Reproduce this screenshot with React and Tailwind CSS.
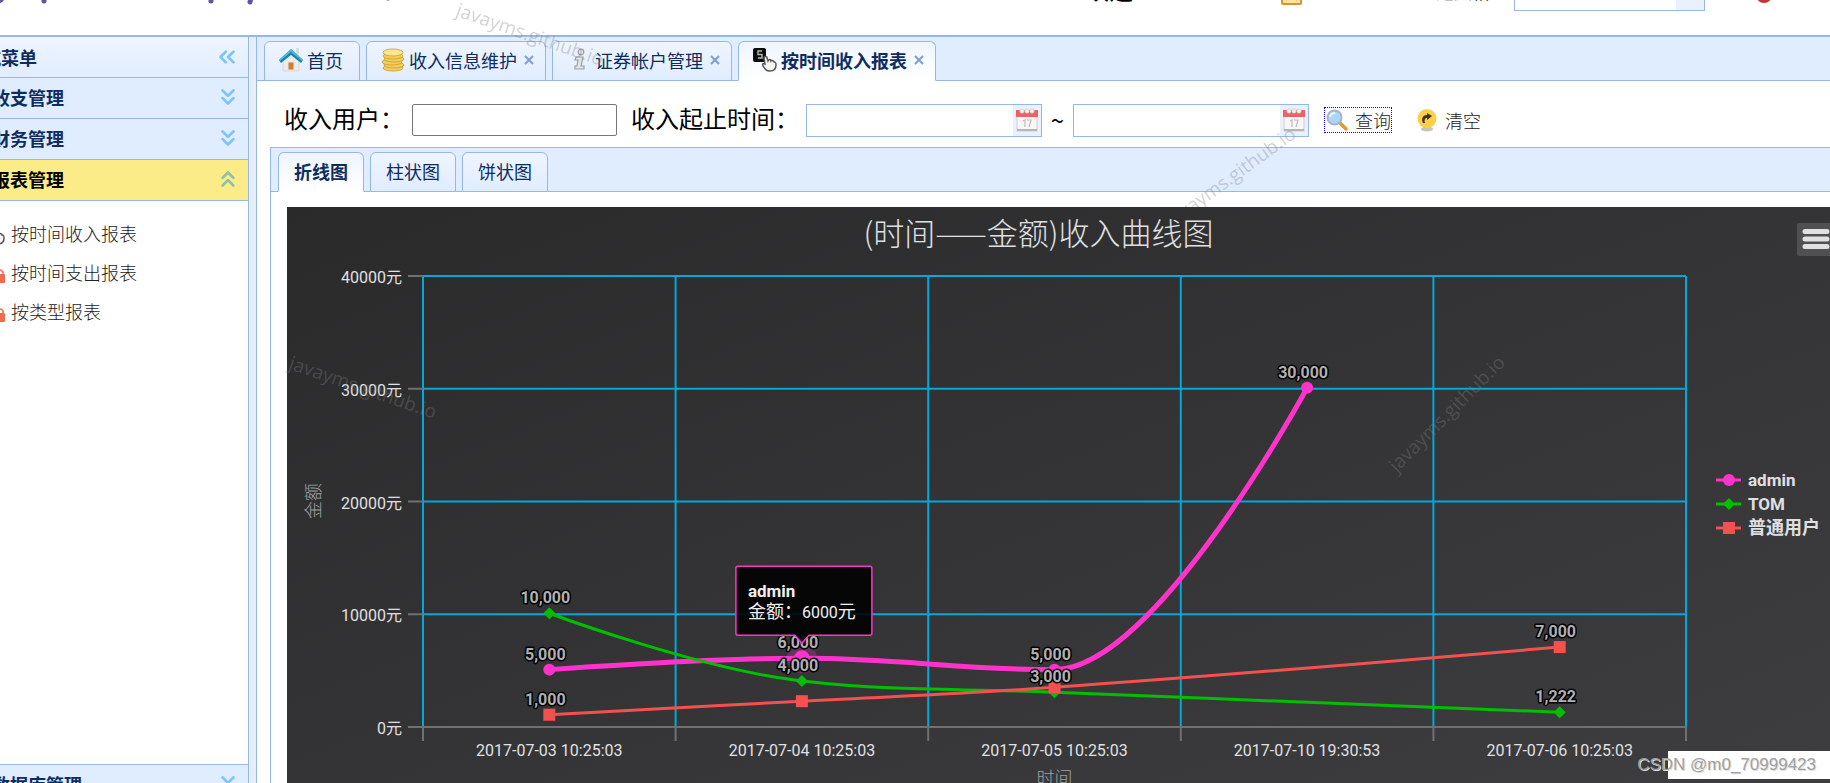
import React, { useLayoutEffect, useRef, useState } from 'react';
import { ChevronsDown, ChevronsLeft, ChevronsUp } from 'lucide-react';

const CHART_FONT = 'Roboto, "Noto Sans CJK SC", sans-serif';

const categories = [
  '2017-07-03 10:25:03',
  '2017-07-04 10:25:03',
  '2017-07-05 10:25:03',
  '2017-07-10 19:30:53',
  '2017-07-06 10:25:03',
];

const series = [
  { name: 'admin', color: '#ff33cc', symbol: 'circle', width: 5, nameSize: 17, data: [5000, 6000, 5000, 30000, null] },
  { name: 'TOM', color: '#00bf00', symbol: 'diamond', width: 3, nameSize: 17, data: [10000, 4000, 3000, null, 1222] },
  { name: '普通用户', color: '#f45050', symbol: 'square', width: 3, nameSize: 18, data: [1000, 2200, 3430, null, 7000] },
];

// labels that would overlap their neighbours are left out
const hiddenLabels = [2200, 3430];

function HomeIcon() {
  return (
    <svg width="24" height="24" viewBox="0 0 24 24">
      <path d="M17 0h3v8h-3z" fill="#dcdce0" />
      <path d="M4 11 12 4l8 7v12H4z" fill="#ececee" stroke="#cfcfd2" strokeWidth="0.6" />
      <path d="M0 12 12 1l12 11-2 3L12 7 2 15z" fill="#1787ab" />
      <path d="M0 12 12 1l12 11-1 1L12 4 1 13z" fill="#4cbbd8" />
      <path d="M9 14h6v8H9z" fill="#c9803f" stroke="#f3e2cf" />
    </svg>
  );
}

function CoinsIcon() {
  return (
    <svg width="24" height="24" viewBox="0 0 24 24">
      <g fill="#f2cf5c" stroke="#c99a2e" strokeWidth="0.8">
        <ellipse cx="12" cy="20" rx="10" ry="3" />
        <ellipse cx="13" cy="17" rx="10" ry="3" />
        <ellipse cx="11" cy="14" rx="10" ry="3" />
        <ellipse cx="13" cy="11" rx="10" ry="3" />
        <ellipse cx="12" cy="8" rx="10" ry="3" />
        <ellipse cx="12" cy="4.5" rx="10" ry="3.5" fill="#fbe590" />
      </g>
    </svg>
  );
}

function InfoIcon() {
  return (
    <svg width="24" height="24" viewBox="0 0 24 24" fill="#e2e4e8" stroke="#9aa0a8" strokeWidth="1.2">
      <circle cx="14" cy="4" r="2.8" />
      <path d="M9 9h7l-2 9h3v3H8v-3h2l1-6H8z" />
    </svg>
  );
}

function ReportIcon() {
  return (
    <svg width="24" height="24" viewBox="0 0 24 24">
      <rect width="13" height="14" rx="2" fill="#0c0c0c" />
      <path d="M9 3H5v3.500h4V10H5" fill="none" stroke="#b9b9b9" strokeWidth="1.4" />
      <path
        d="M11 10c0-2 3-2 3 0l1 3c1-2 3-2 3 0c1-1 3 0 3 1c2 0 2 1 2 3c0 4-2 6-6 6s-5-2-7-5c-1-2 0-3 2-2z"
        fill="#f4f4f4"
        stroke="#555"
        strokeWidth="1.5"
      />
    </svg>
  );
}

function LockIcon() {
  return (
    <svg width="24" height="24" viewBox="0 0 24 24">
      <path d="M15 15v-3a4 4 0 0 1 7 0v3" fill="none" stroke="#ee8a70" strokeWidth="2" />
      <rect x="10" y="14" width="14" height="9" rx="1" fill="#ee6c4d" />
    </svg>
  );
}

function CalendarIcon() {
  return (
    <svg width="22" height="24" viewBox="0 0 22 24">
      <rect x="1" y="4" width="20" height="19" fill="#f7f7f7" stroke="#cfcfcf" />
      <path d="M0 2h22v7H0z" fill="#ec6262" />
      <g fill="#f2f2f2" stroke="#c9c9c9" strokeWidth="0.7">
        <circle cx="6" cy="3" r="2.2" />
        <circle cx="11" cy="3" r="2.2" />
        <circle cx="16" cy="3" r="2.2" />
      </g>
      <path d="M7 13l2-1v7M11 12h4l-2 7" fill="none" stroke="#bdbdbd" strokeWidth="1.2" />
      <path d="M1 22h20" stroke="#b5b5b5" strokeWidth="2" />
    </svg>
  );
}

function SearchIcon() {
  return (
    <svg width="22" height="22" viewBox="0 0 22 22">
      <path d="M13 13l7 7" stroke="#e8952f" strokeWidth="3.5" strokeLinecap="round" />
      <circle cx="8.5" cy="8.5" r="7" fill="#a9d6fb" stroke="#aab4cc" strokeWidth="2" />
      <path d="M4 8a5 5 0 0 1 5-4" stroke="#e8f5ff" strokeWidth="2" fill="none" />
    </svg>
  );
}

function ClearIcon() {
  return (
    <svg width="22" height="24" viewBox="0 0 22 24">
      <ellipse cx="11" cy="21" rx="6" ry="2.5" fill="#c9c4b4" />
      <circle cx="11" cy="10.5" r="9.5" fill="#fbcf4a" />
      <path d="M7 15c-2-5 0-8 4-8V5l5 3-5 4v-2c-2 0-3 2-2 5z" fill="#3a3424" />
    </svg>
  );
}

function CloseIcon() {
  return (
    <svg width="10" height="10" viewBox="0 0 10 10" stroke="#7d9fd0" strokeWidth="2">
      <path d="M1 1l8 8M9 1L1 9" />
    </svg>
  );
}

function Symbol({ type, x, y, color, size = 6 }) {
  if (type === 'circle') return <circle cx={x} cy={y} r={size} fill={color} />;
  if (type === 'square') {
    return <rect x={x - size} y={y - size} width={size * 2} height={size * 2} fill={color} />;
  }
  return <path d={`M${x} ${y - size}L${x + size} ${y}L${x} ${y + size}L${x - size} ${y}Z`} fill={color} />;
}

// smooth curve through the points, never overshooting a local extreme
function splinePath(pts) {
  let d = `M${pts[0].x} ${pts[0].y}`;
  let out = pts[0];
  for (let i = 1; i < pts.length; i++) {
    const p = pts[i];
    const prev = pts[i - 1];
    const next = pts[i + 1];
    let inn = p;
    let nextOut = p;
    if (next) {
      const lx = (1.5 * p.x + prev.x) / 2.5;
      const rx = (1.5 * p.x + next.x) / 2.5;
      let ly = (1.5 * p.y + prev.y) / 2.5;
      let ry = (1.5 * p.y + next.y) / 2.5;
      const fix = ((ry - ly) * (rx - p.x)) / (rx - lx) + p.y - ry;
      ly += fix;
      ry += fix;
      if (ly > prev.y && ly > p.y) {
        ly = Math.max(prev.y, p.y);
        ry = 2 * p.y - ly;
      } else if (ly < prev.y && ly < p.y) {
        ly = Math.min(prev.y, p.y);
        ry = 2 * p.y - ly;
      }
      if (ry > next.y && ry > p.y) {
        ry = Math.max(next.y, p.y);
        ly = 2 * p.y - ry;
      } else if (ry < next.y && ry < p.y) {
        ry = Math.min(next.y, p.y);
        ly = 2 * p.y - ry;
      }
      inn = { x: lx, y: ly };
      nextOut = { x: rx, y: ry };
    }
    d += `C${out.x} ${out.y} ${inn.x} ${inn.y} ${p.x} ${p.y}`;
    out = nextOut;
  }
  return d;
}

function LineChart() {
  const box = useRef(null);
  const [width, setWidth] = useState(1200);

  useLayoutEffect(() => {
    const measure = () => setWidth(box.current.clientWidth);
    measure();
    window.addEventListener('resize', measure);
    return () => window.removeEventListener('resize', measure);
  }, []);

  const left = 136;
  const right = width - 144;
  const top = 69;
  const bottom = 520;
  const step = (right - left) / categories.length;
  const xOf = (i) => left + step * (i + 0.5);
  const yOf = (v) => bottom - (v / 40000) * (bottom - top);
  const points = series.map((s) =>
    s.data.map((v, i) => (v === null ? null : { v, x: xOf(i), y: yOf(v) - 1 })).filter(Boolean)
  );
  const tip = points[0][1];

  return (
    <div ref={box} className="w-full overflow-hidden">
      <svg width={width} height="600" fontFamily={CHART_FONT} className="block">
        <defs>
          <linearGradient id="chartBg" x1="0" y1="0" x2="1" y2="1">
            <stop offset="0" stopColor="#2a2a2b" />
            <stop offset="1" stopColor="#3e3e40" />
          </linearGradient>
        </defs>
        <rect width={width} height="600" fill="url(#chartBg)" />

        <text
          x={(left + right) / 2 - 16}
          y="38"
          textAnchor="middle"
          fill="#e0e0e3"
          fontSize="31"
          fontWeight="300"
          fontFamily='"Noto Sans CJK SC", sans-serif'
        >
          (时间——金额)收入曲线图
        </text>

        <g stroke="#00a8dc" strokeWidth="2">
          {[0, 10000, 20000, 30000, 40000].map((v) => (
            <path key={v} d={`M${left} ${yOf(v)}H${right}`} />
          ))}
          {[0, 1, 2, 3, 4, 5].map((i) => (
            <path key={i} d={`M${left + step * i} ${top}V${bottom}`} />
          ))}
        </g>
        <g stroke="#707073" strokeWidth="2">
          <path d={`M${left} ${bottom}H${right}`} />
          {[0, 1, 2, 3, 4, 5].map((i) => (
            <path key={i} d={`M${left + step * i} ${bottom}v14`} />
          ))}
          {[0, 10000, 20000, 30000, 40000].map((v) => (
            <path key={v} d={`M${left} ${yOf(v)}h-15`} />
          ))}
        </g>

        <g fill="#e0e0e3" fontSize="16">
          {[0, 10000, 20000, 30000, 40000].map((v) => (
            <text key={v} x="115" y={yOf(v) + 7} textAnchor="end">
              {v}元
            </text>
          ))}
          {categories.map((c, i) => (
            <text key={c} x={xOf(i)} y="549" textAnchor="middle">
              {c}
            </text>
          ))}
        </g>
        <g fill="#a0a0a3" fontSize="18" fontWeight="300" textAnchor="middle">
          <text x={(left + right) / 2} y="578">时间</text>
          <text transform="translate(33 294) rotate(-90)">金额</text>
        </g>

        {series.map((s, i) => (
          <g key={s.name}>
            <path d={splinePath(points[i])} fill="none" stroke={s.color} strokeWidth={s.width} />
            {i === 0 && <circle cx={tip.x} cy={tip.y} r="15" fill={s.color} opacity="0.25" />}
            {points[i].map((p) => (
              <Symbol key={p.x} type={s.symbol} x={p.x} y={p.y} color={s.color} size={p === tip ? 8 : 6} />
            ))}
          </g>
        ))}
        <g
          fill="#b0b0b3"
          fontSize="16"
          fontWeight="bold"
          textAnchor="middle"
          stroke="#000"
          strokeWidth="3"
          strokeLinejoin="round"
          paintOrder="stroke"
        >
          {points.map((pts) =>
            pts
              .filter((p) => !hiddenLabels.includes(p.v))
              .map((p) => (
                <text key={`${p.x}-${p.v}`} x={p.x - 4} y={p.y - 10}>
                  {p.v.toLocaleString('en-US')}
                </text>
              ))
          )}
        </g>

        <g>
          <path
            d={`M${tip.x - 64} ${tip.y - 92}h132a2 2 0 0 1 2 2v65a2 2 0 0 1-2 2h-61l-7 8l-7-8h-57a2 2 0 0 1-2-2v-65a2 2 0 0 1 2-2z`}
            fill="#000"
            fillOpacity="0.88"
            stroke="#ff33cc"
            strokeWidth="1.500"
          />
          <text x={tip.x - 54} y={tip.y - 61} fill="#f0f0f0" fontSize="17" fontWeight="bold">admin</text>
          <text x={tip.x - 54} y={tip.y - 40} fill="#f0f0f0" fontSize="18">
            金额：<tspan fontSize="16">6000</tspan>元
          </text>
        </g>

        <g fill="#e0e0e3" fontWeight="bold">
          {series.map((s, i) => (
            <g key={s.name}>
              <path d={`M${width - 114} ${273 + i * 24}h25`} stroke={s.color} strokeWidth="3" />
              <Symbol type={s.symbol} x={width - 101} y={273 + i * 24} color={s.color} />
              <text x={width - 82} y={279 + i * 24} fontSize={s.nameSize}>{s.name}</text>
            </g>
          ))}
        </g>

        <rect x={width - 33} y="16" width="40" height="33" rx="2" fill="#505053" />
        <path
          d={`M${width - 25} 24.500h22M${width - 25} 32h22M${width - 25} 39.500h22`}
          stroke="#e0e0e3"
          strokeWidth="5"
          strokeLinecap="round"
        />
      </svg>
    </div>
  );
}

const mainTabs = [
  { title: '首页', icon: HomeIcon },
  { title: '收入信息维护', icon: CoinsIcon, closable: true },
  { title: '证券帐户管理', icon: InfoIcon, closable: true },
  { title: '按时间收入报表', icon: ReportIcon, closable: true, active: true },
];

const chartTabs = ['折线图', '柱状图', '饼状图'];

const tabBase = 'flex h-[40px] items-center rounded-t-md border border-[#95b8e7] pb-0.5 text-lg text-[#0e2d5f]';
const tabOn = 'border-b-white bg-linear-to-b from-[#eff5ff] to-white font-bold';
const tabOff = 'bg-linear-to-b from-[#eff5ff] to-[#e0ecff]';

function MainTab({ tab }) {
  const Icon = tab.icon;
  return (
    <div className={`${tabBase} ${tab.active ? tabOn : tabOff} pl-3.5 ${tab.closable ? 'pr-[11px]' : 'pr-4'}`}>
      <button type="button" className="flex items-center gap-1 whitespace-nowrap">
        <Icon />
        {tab.title}
      </button>
      {tab.closable && (
        <button type="button" aria-label={`关闭${tab.title}`} className="ml-[7px]">
          <CloseIcon />
        </button>
      )}
    </div>
  );
}

function AccordionHeader({ title, open }) {
  const Arrow = open ? ChevronsUp : ChevronsDown;
  return (
    <button
      type="button"
      className={`flex h-[41px] w-full shrink-0 items-center justify-between border-b border-[#95b8e7] pr-[7px] pb-0.5 text-lg font-bold whitespace-nowrap ${
        open ? 'bg-[#fbec88] text-black' : 'bg-[#e0ecff] text-[#0e2d5f]'
      }`}
    >
      <span className="-ml-2">{title}</span>
      <Arrow size={26} strokeWidth={2.5} className={open ? 'text-[#8fc0a8]' : 'text-[#7cc4fa]'} />
    </button>
  );
}

function Sidebar() {
  return (
    <aside className="flex w-[249px] shrink-0 flex-col overflow-hidden border-r border-[#95b8e7] bg-white">
      <div className="flex h-[41px] shrink-0 items-center justify-between border-b border-[#95b8e7] bg-linear-to-b from-[#eff5ff] to-[#e0ecff] pr-2 text-lg font-bold whitespace-nowrap text-[#0e2d5f]">
        <h2 className="-ml-[35px]">导航菜单</h2>
        <button type="button" aria-label="折叠">
          <ChevronsLeft size={26} strokeWidth={2.5} className="text-[#7cc4fa]" />
        </button>
      </div>
      <div className="flex min-h-0 flex-1 flex-col">
        <AccordionHeader title="收支管理" />
        <AccordionHeader title="财务管理" />
        <AccordionHeader title="报表管理" open />
        <ul className="flex-1 pt-3 text-lg font-light text-[#222]">
          {[
            ['按时间收入报表', ReportIcon],
            ['按时间支出报表', LockIcon],
            ['按类型报表', LockIcon],
          ].map(([name, Icon]) => (
            <li key={name} className="-ml-[19px] h-[39px]">
              <a href="#" className="flex h-full items-center gap-1.5">
                <Icon />
                {name}
              </a>
            </li>
          ))}
        </ul>
        <div className="-mb-[23px] border-t border-[#95b8e7]">
          <AccordionHeader title="数据库管理" />
        </div>
      </div>
    </aside>
  );
}

function TopBar() {
  return (
    <header className="h-[37px] shrink-0 overflow-hidden border-b-2 border-[#95b8e7] bg-white">
      <div className="-mt-[22px] flex h-[33px] items-center justify-end text-lg whitespace-nowrap">
        <svg width="400" height="33" className="mr-auto shrink-0" fill="none" stroke="#5f55a8" strokeWidth="5" strokeLinecap="round">
          <path d="M-2 23q4 0 5-6M44 8v15M211 8v15M249 8q3 9 1 16M388 8v12" />
        </svg>
        <strong className="mb-3 text-2xl">欢迎:</strong>
        <span className="mr-[82px] mb-3 ml-1 text-[#444]">admin</span>
        <a href="#" className="mr-[74px] flex items-center gap-1.5">
          <svg width="21" height="24" viewBox="0 0 21 24">
            <rect x="1" y="2" width="19" height="19" rx="1" fill="#fbe3a0" stroke="#e0912f" strokeWidth="2" />
            <path d="M5 17l6-6 5 6" fill="none" stroke="#e9b44c" strokeWidth="2" />
          </svg>
          <span className="mb-3">修改</span>
        </a>
        <label htmlFor="theme" className="mr-6 mb-2">主题风格</label>
        <select id="theme" className="mr-[49px] h-[33px] w-[191px] appearance-none border border-[#95b8e7] bg-linear-to-r from-white from-85% to-[#e9f1fe] to-85%" />
        <a href="#" className="-mr-6 flex items-center gap-2">
          <svg width="20" height="20" viewBox="0 0 20 20">
            <circle cx="10" cy="10" r="8" fill="#c8323c" />
          </svg>
          <span className="mb-3">安全退出</span>
        </a>
      </div>
    </header>
  );
}

function DateBox({ label }) {
  return (
    <span className="flex h-[33px] w-[236px] border border-[#95b8e7] bg-white">
      <input type="text" aria-label={label} className="min-w-0 flex-1 px-1 text-lg outline-none" />
      <button type="button" aria-label="选择日期" className="flex w-7 items-center justify-center bg-[#e9f1fe]">
        <CalendarIcon />
      </button>
    </span>
  );
}

function SearchForm() {
  return (
    <form className="flex h-[66px] items-center pt-3 pl-3.5 text-2xl whitespace-nowrap text-black">
      <label htmlFor="user" className="mr-2 pb-1">收入用户：</label>
      <input id="user" type="text" className="mr-3.5 h-8 w-[205px] rounded-xs border border-[#767676] px-1 text-lg" />
      <span className="mr-[7px] pb-1">收入起止时间：</span>
      <DateBox label="开始时间" />
      <span className="w-[31px] text-center">~</span>
      <DateBox label="结束时间" />
      <button type="button" className="ml-[15px] flex h-[26px] items-center gap-[7px] border border-dotted border-[#0000ff] pl-px text-lg font-light text-[#222]">
        <SearchIcon />
        查询
      </button>
      <button type="reset" className="ml-6 flex h-[26px] items-center gap-[7px] text-lg font-light text-[#222]">
        <ClearIcon />
        清空
      </button>
    </form>
  );
}

function Watermark({ className }) {
  return (
    <span
      className={`pointer-events-none absolute origin-left font-['Open_Sans',sans-serif] text-[19px] leading-5 text-[#808080]/35 ${className}`}
    >
      javayms.github.io
    </span>
  );
}

export default function App() {
  return (
    <div className="relative flex h-screen flex-col overflow-hidden bg-white font-['Noto_Sans_CJK_SC',sans-serif]">
      <TopBar />
      <div className="flex min-h-0 flex-1">
        <Sidebar />
        <div className="w-[7px] shrink-0 bg-[#e6eefb]" />
        <main className="flex min-w-0 flex-1 flex-col border-l border-[#95b8e7]">
          <nav className="flex h-11 shrink-0 items-end gap-1.5 border-b border-[#95b8e7] bg-[#e0ecff] pl-[7px]">
            {mainTabs.map((tab) => (
              <div key={tab.title} className="-mb-px">
                <MainTab tab={tab} />
              </div>
            ))}
          </nav>
          <div className="flex min-h-0 flex-1 flex-col pl-[13px]">
            <SearchForm />
            <section className="min-h-0 flex-1 overflow-hidden border-t border-l border-[#95b8e7]">
              <div className="flex h-11 items-end gap-1.5 border-b border-[#95b8e7] bg-[#e0ecff] pl-[7px]">
                {chartTabs.map((t, i) => (
                  <button key={t} type="button" className={`${tabBase} ${i === 0 ? tabOn : tabOff} -mb-px px-[15px]`}>
                    {t}
                  </button>
                ))}
              </div>
              <div className="pt-[15px] pl-4">
                <LineChart />
              </div>
            </section>
          </div>
        </main>
      </div>
      <div className="pointer-events-none absolute inset-x-0 top-0 h-[207px] overflow-hidden">
        <Watermark className="-top-px left-[457px] rotate-[19deg]" />
        <Watermark className="top-[212px] left-[1168px] -rotate-[36deg]" />
      </div>
      <Watermark className="top-[352px] left-[290px] rotate-[19deg]" />
      <Watermark className="top-[458px] left-[1392px] -rotate-[45deg]" />
      <div className="absolute right-0 bottom-1 flex h-7 w-[162px] items-center justify-end bg-white pr-3.5 font-['Liberation_Sans',sans-serif] text-[17px] whitespace-nowrap text-[#a0a0a0] text-shadow-[1px_1px_0_#ddd]">
        CSDN @m0_70999423
      </div>
    </div>
  );
}
